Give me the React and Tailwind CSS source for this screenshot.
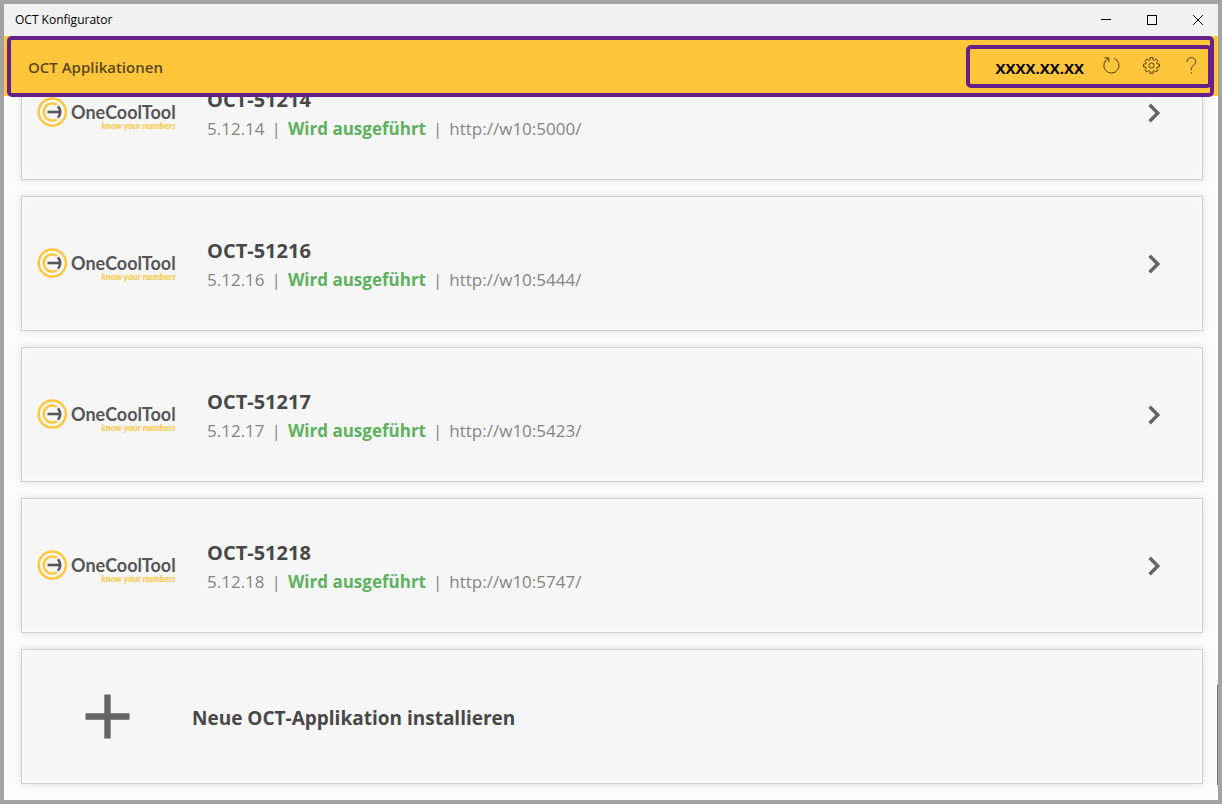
import React from 'react'

const applications = [
  { name: 'OCT-51214', version: '5.12.14', status: 'Wird ausgeführt', url: 'http://w10:5000/' },
  { name: 'OCT-51216', version: '5.12.16', status: 'Wird ausgeführt', url: 'http://w10:5444/' },
  { name: 'OCT-51217', version: '5.12.17', status: 'Wird ausgeführt', url: 'http://w10:5423/' },
  { name: 'OCT-51218', version: '5.12.18', status: 'Wird ausgeführt', url: 'http://w10:5747/' }
]

const cardClass =
  'flex h-[135px] w-full shrink-0 items-center border border-[#cfcfcf] bg-[#f6f6f6] text-left shadow-[0_0_8px_rgba(0,0,0,0.12),inset_0_0_8px_rgba(255,255,255,0.8)]'

const Logo = () => (
  <div className="flex w-[141px] items-start gap-1">
    <svg className="h-[30px] w-[30px] shrink-0" viewBox="0 0 30 30" fill="none" aria-hidden="true">
      <circle cx="15.3" cy="15" r="13.6" stroke="#ffc73c" strokeWidth="2.5" />
      <path d="M20 7.8A8.6 8.6 0 1 0 20 22.2" stroke="#ffc73c" strokeWidth="2.5" />
      <path d="M10.5 15H23" stroke="#57565b" strokeWidth="2.6" />
      <path d="M21 9.2Q25.4 15 21 20.8" stroke="#57565b" strokeWidth="2.6" />
    </svg>
    <div className="flex flex-col items-end pt-[5px] font-['Lato','Open_Sans',sans-serif]">
      <span className="text-[18px] leading-5 font-bold text-[#57565b]">OneCoolTool</span>
      <span className="text-[9px] leading-[7px] font-bold text-[#ffc73c] italic">know your numbers</span>
    </div>
  </div>
)

const ApplicationCard = ({ application }) => (
  <button type="button" className={`${cardClass} pr-10 pl-[15px]`} aria-label={`${application.name} öffnen`}>
    <Logo />
    <div className="ml-[29px] flex-1 pt-[3px]">
      <h2 className="text-[20px] leading-7 font-bold text-[#484848]">{application.name}</h2>
      <p className="flex gap-[7px] text-[17px] leading-[29px] text-[#858585]">
        <span>{application.version}</span>
        <span>|</span>
        <span className="font-bold text-[#5fb15f]">{application.status}</span>
        <span>|</span>
        <span>{application.url}</span>
      </p>
    </div>
    <svg className="h-5 w-4" viewBox="0 0 16 20" fill="none" stroke="#646464" strokeWidth="3.4" aria-hidden="true">
      <path d="M3.6 1.8L11.8 10L3.6 18.2" />
    </svg>
  </button>
)

const TitleBar = () => (
  <div className="flex h-8 shrink-0 items-center justify-between bg-[#f1f1f1] pl-[11px] text-black">
    <span className="text-[12px]">OCT Konfigurator</span>
    <div className="-mr-[3px] flex h-full">
      <button type="button" className="flex w-[46px] items-center justify-center" aria-label="Minimieren">
        <svg className="h-3 w-3" viewBox="0 0 12 12" stroke="currentColor" fill="none" shapeRendering="crispEdges">
          <path d="M1 5.5H11" />
        </svg>
      </button>
      <button type="button" className="flex w-[46px] items-center justify-center" aria-label="Maximieren">
        <svg className="h-3 w-3" viewBox="0 0 12 12" stroke="currentColor" fill="none" shapeRendering="crispEdges">
          <path d="M1.5 1.5H10.5V10.5H1.5Z" />
        </svg>
      </button>
      <button type="button" className="flex w-[46px] items-center justify-center" aria-label="Schließen">
        <svg className="h-3 w-3" viewBox="0 0 12 12" stroke="currentColor" fill="none">
          <path d="M1 1L11 11M11 1L1 11" />
        </svg>
      </button>
    </div>
  </div>
)

// outline of an eight-toothed wheel, starting at the top tooth
const gearPoints = Array.from({ length: 8 }, (_, i) =>
  [
    [-15, 5.9],
    [-11, 8],
    [11, 8],
    [15, 5.9]
  ].map(([offset, r]) => {
    const angle = ((i * 45 - 90 + offset) * Math.PI) / 180
    return `${(8.5 + r * Math.cos(angle)).toFixed(2)},${(8.5 + r * Math.sin(angle)).toFixed(2)}`
  })
)
  .flat()
  .join(' ')

const Header = () => (
  <header className="z-10 h-15 shrink-0 bg-[#ffc63b] pr-1 pl-[3px]">
    <div className="flex h-[61px] items-center justify-between rounded-[5px] border-4 border-[#66208a] pl-[17px]">
      <h1 className="pt-0.5 text-[15px] font-semibold text-[#5a481c]">OCT Applikationen</h1>
      <div className="-mr-0.5 flex h-[43px] w-[246px] items-center justify-end rounded-[5px] border-4 border-[#66208a] pr-2">
        <span className="mr-[19px] pt-1 text-[15px] font-bold text-black">XXXX.XX.XX</span>
        <div className="flex gap-[23px] pb-0.5 text-[#4d3d12]">
          <button type="button" aria-label="Aktualisieren">
            <svg className="h-[17px] w-[17px]" viewBox="0 0 17 17" fill="none" stroke="currentColor">
              <path d="M11.2 1.4A7.6 7.6 0 1 1 5.2 1.6M1.4 .9H5.8V5.2" />
            </svg>
          </button>
          <button type="button" aria-label="Einstellungen">
            <svg className="h-[17px] w-[17px]" viewBox="0 0 17 17" fill="none" stroke="currentColor">
              <polygon points={gearPoints} strokeLinejoin="round" />
              <circle cx="8.5" cy="8.5" r="2.6" />
            </svg>
          </button>
          <button type="button" aria-label="Hilfe">
            <svg className="h-[17px] w-[17px]" viewBox="0 0 17 17" fill="none" stroke="currentColor">
              <path d="M4 5C4 2.2 5.9 .7 8.4 .7S12.8 2.3 12.8 4.6C12.8 8.1 8.4 8.3 8.4 11.8V13.2M8.4 15V16.6" />
            </svg>
          </button>
        </div>
      </div>
    </div>
  </header>
)

const App = () => {
  return (
    <div className="relative flex h-screen flex-col overflow-hidden border-4 border-[#a3a3a3] bg-[#fcfcfc] font-['Open_Sans','Noto_Sans',sans-serif]">
      <TitleBar />
      <Header />
      <main className="flex min-h-0 flex-1 flex-col justify-end gap-4 overflow-hidden pr-[15px] pb-4 pl-[17px]">
        {applications.map((application) => (
          <ApplicationCard key={application.name} application={application} />
        ))}
        <button type="button" className={`${cardClass} pl-[62px]`}>
          <svg className="h-[46px] w-[46px]" viewBox="0 0 46 46" stroke="#646464" strokeWidth="6.4" aria-hidden="true">
            <path d="M23.5 .5V44.5M1.5 22.5H45.5" />
          </svg>
          <span className="ml-[62px] pt-1 text-[19px] font-bold text-[#484848]">Neue OCT-Applikation installieren</span>
        </button>
      </main>
      <div className="absolute right-0 bottom-[15px] h-[100px] w-px bg-[#777]" />
    </div>
  )
}

export default App
